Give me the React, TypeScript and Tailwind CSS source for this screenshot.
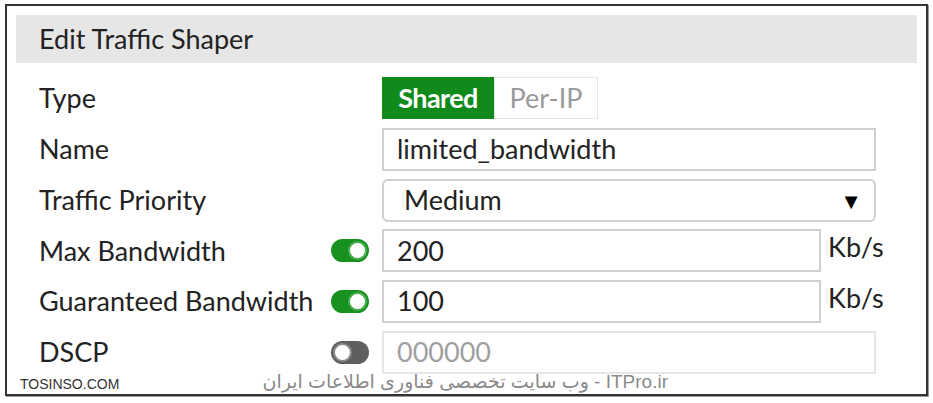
import React from "react"

const lato = { fontFamily: "Lato, 'Open Sans', sans-serif" }

function Toggle({ on }: { on: boolean }) {
    return (
        <div
            className={
                on
                    ? "w-[38px] h-[23px] rounded-full bg-[#17911f] flex items-center justify-end pr-[2px]"
                    : "w-[38px] h-[23px] rounded-full bg-[#5f5f5f] flex items-center justify-start pl-[2px]"
            }
        >
            <div
                className={
                    on
                        ? "w-[19px] h-[19px] rounded-full bg-white border-2 border-[#4caf50]"
                        : "w-[19px] h-[19px] rounded-full bg-white border-2 border-[#8a8a8a]"
                }
            />
        </div>
    )
}

function Row({ label, toggle, children }: { label: string; toggle?: boolean; children: React.ReactNode }) {
    return (
        <div className="flex items-center h-[43px]">
            <div className="w-[315px] pl-[23px] text-[27px] text-[#222] whitespace-nowrap">{label}</div>
            <div className="w-[37px]">{toggle !== undefined && <Toggle on={toggle} />}</div>
            <div className="ml-[14px] flex items-start h-full">{children}</div>
        </div>
    )
}

export default function App() {
    return (
        <div className="relative w-[933px] h-[403px] bg-white pl-[5px] pt-[4px]" style={lato}>
            <div className="w-[923px] h-[392px] border-2 border-[#333] p-[9px] shadow-[1px_1px_0_#999]">
                <div className="h-[48px] bg-[#e6e6e6] pl-[23px] flex items-center text-[27px] text-[#222]">
                    Edit Traffic Shaper
                </div>

                <div className="mt-[14px] flex flex-col gap-[7.8px]">
                    <Row label="Type">
                        <div className="flex h-[42px]">
                            <div className="w-[112px] bg-[#118a1c] text-white text-[27px] flex items-center justify-center font-bold tracking-[-0.6px]">
                                Shared
                            </div>
                            <div className="w-[104px] border border-[#e5e5e5] text-[#9a9a9a] text-[27px] flex items-center justify-center">
                                Per-IP
                            </div>
                        </div>
                    </Row>
                    <Row label="Name">
                        <div className="w-[494px] h-[43px] border-2 border-[#d0d0d0] flex items-center pl-[13px] text-[27px] text-[#222]">
                            limited_bandwidth
                        </div>
                    </Row>
                    <Row label="Traffic Priority">
                        <div className="w-[494px] h-[43px] border-2 border-[#d0d0d0] rounded-[6px] flex items-center justify-between pl-[20px] pr-[12px] text-[27px] text-[#222]">
                            <span>Medium</span>
                            <span className="text-[22px] text-black">▼</span>
                        </div>
                    </Row>
                    <Row label="Max Bandwidth" toggle={true}>
                        <div className="w-[439px] h-[43px] border-2 border-[#d0d0d0] flex items-center pl-[13px] text-[27px] text-[#222]">
                            200
                        </div>
                        <span className="ml-[7px] text-[27px] text-[#222] leading-[36px]">Kb/s</span>
                    </Row>
                    <Row label="Guaranteed Bandwidth" toggle={true}>
                        <div className="w-[439px] h-[43px] border-2 border-[#d0d0d0] flex items-center pl-[13px] text-[27px] text-[#222]">
                            100
                        </div>
                        <span className="ml-[7px] text-[27px] text-[#222] leading-[36px]">Kb/s</span>
                    </Row>
                    <Row label="DSCP" toggle={false}>
                        <div className="w-[494px] h-[43px] border-2 border-[#e6e6e6] flex items-center pl-[13px] text-[27px] text-[#a0a0a0]">
                            000000
                        </div>
                    </Row>
                </div>
            </div>

            <div
                className="absolute left-[20px] top-[374px] text-[14px] text-[#333]"
                style={{ fontFamily: "'Liberation Sans', Arial, sans-serif" }}
            >
                TOSINSO.COM
            </div>
            <div
                dir="rtl"
                className="absolute right-[265px] top-[368px] text-[19px] text-[#8a8a8a] whitespace-nowrap"
                style={{ fontFamily: "'Liberation Sans', 'DejaVu Sans', sans-serif" }}
            >
                ITPro.ir - وب سایت تخصصی فناوری اطلاعات ایران
            </div>
        </div>
    )
}
